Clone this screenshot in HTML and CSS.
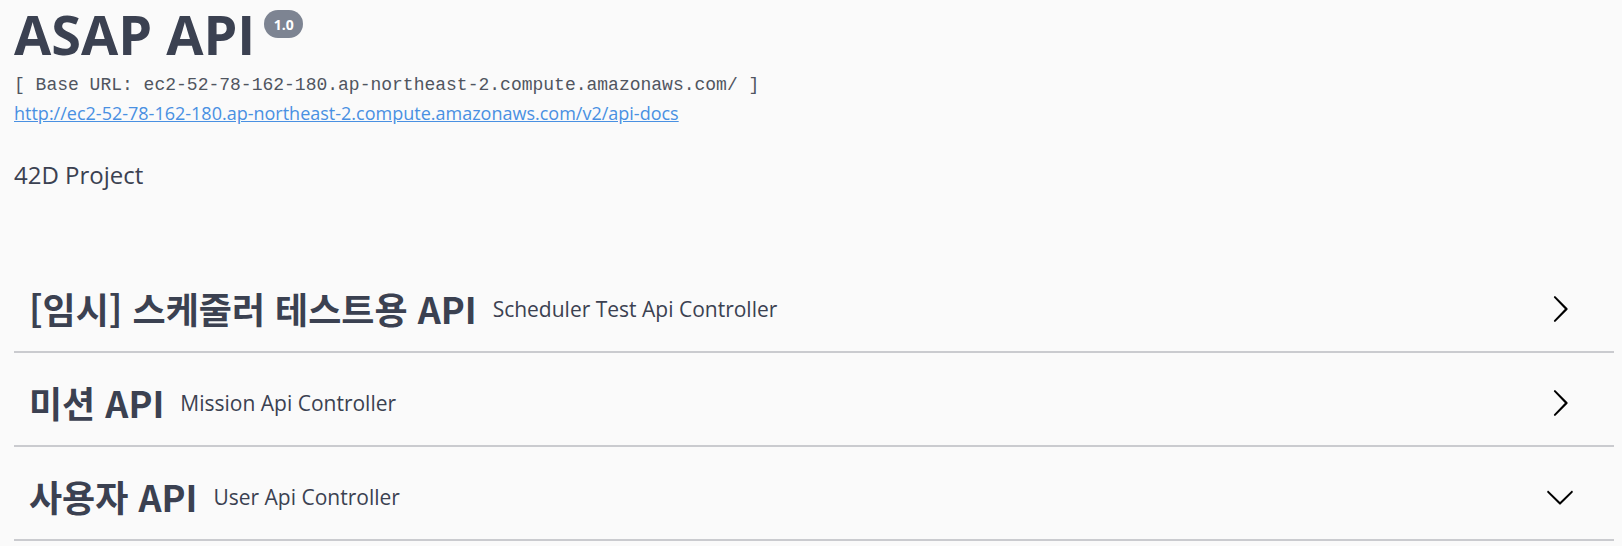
FILE: index.html
```html
<!DOCTYPE html>
<html lang="ko">
<head>
<meta charset="utf-8">
<title>ASAP API</title>
<link rel="stylesheet" href="styles.css">
</head>
<body>
<div class="wrapper">
  <div class="info">
    <div class="title-row">
      <h2 class="title">ASAP API</h2>
      <span class="version">1.0</span>
    </div>
    <div class="base-url">[ Base URL: ec2-52-78-162-180.ap-northeast-2.compute.amazonaws.com/ ]</div>
    <a class="docs-link" href="#">http://ec2-52-78-162-180.ap-northeast-2.compute.amazonaws.com/v2/api-docs</a>
    <p class="description">42D Project</p>
  </div>
  <div class="tags">
    <div class="tag">
      <h4 class="tag-title"><span class="tag-name">[임시] 스케줄러 테스트용 API</span><small class="tag-desc">Scheduler Test Api Controller</small></h4>
      <svg class="arrow" width="30" height="30" viewBox="0 0 20 20"><path d="M13.25 10L6.109 2.58a.697.697 0 0 1 0-.979.68.68 0 0 1 .969 0l7.83 7.908a.697.697 0 0 1 0 .979l-7.83 7.909a.68.68 0 0 1-.969 0 .697.697 0 0 1 0-.98L13.25 10z"/></svg>
    </div>
    <div class="tag">
      <h4 class="tag-title"><span class="tag-name">미션 API</span><small class="tag-desc">Mission Api Controller</small></h4>
      <svg class="arrow" width="30" height="30" viewBox="0 0 20 20"><path d="M13.25 10L6.109 2.58a.697.697 0 0 1 0-.979.68.68 0 0 1 .969 0l7.83 7.908a.697.697 0 0 1 0 .979l-7.83 7.909a.68.68 0 0 1-.969 0 .697.697 0 0 1 0-.98L13.25 10z"/></svg>
    </div>
    <div class="tag">
      <h4 class="tag-title"><span class="tag-name">사용자 API</span><small class="tag-desc">User Api Controller</small></h4>
      <svg class="arrow" width="30" height="30" viewBox="0 0 20 20"><path d="M17.418 6.109c.272-.268.709-.268.979 0s.271.701 0 .969l-7.908 7.83c-.27.268-.707.268-.979 0l-7.908-7.830c-.27-.268-.27-.701 0-.969.271-.268.709-.268.979 0L10 13.25l7.418-7.141z"/></svg>
    </div>
  </div>
</div>
</body>
</html>
```
FILE: styles.css
```css
html, body {
  margin: 0;
  padding: 0;
  background: #fafafa;
}
body {
  color: #3b4151;
  font-family: "Open Sans", "Noto Sans CJK KR", sans-serif;
}
.wrapper {
  width: 1600px;
  margin-left: 14px;
  padding-top: 4px;
}
.title-row {
  display: flex;
  align-items: flex-start;
}
.title {
  margin: 0;
  font-family: "Open Sans", sans-serif;
  font-weight: 700;
  font-size: 54px;
  line-height: 60px;
  color: #3b4151;
}
.version {
  margin-left: 9px;
  margin-top: 6px;
  width: 39px;
  height: 28px;
  border-radius: 14px;
  background: #7d8492;
  color: #fff;
  font-family: "Open Sans", sans-serif;
  font-weight: 700;
  font-size: 14px;
  display: flex;
  align-items: center;
  justify-content: center;
}
.base-url {
  margin-top: 9px;
  font-family: "Liberation Mono", monospace;
  font-size: 18px;
  line-height: 24px;
  color: #50555f;
  white-space: pre;
}
.docs-link {
  display: block;
  margin-top: 4px;
  font-family: "Open Sans", sans-serif;
  font-size: 18px;
  line-height: 24px;
  color: #4990e2;
  text-decoration: underline;
  width: max-content;
}
.description {
  margin: 34px 0 0;
  font-family: "Open Sans", sans-serif;
  font-size: 24px;
  line-height: 32px;
}
.tags {
  margin-top: 75px;
}
.tag {
  display: flex;
  align-items: center;
  justify-content: space-between;
  padding: 15px 39px 15px 15px;
  margin-bottom: 7px;
  border-bottom: 2px solid rgba(59, 65, 81, 0.25);
}
.tag-title {
  margin: 0;
  height: 55px;
  display: flex;
  align-items: center;
  font-weight: 700;
}
.tag-name {
  font-family: "Noto Sans CJK KR", sans-serif;
  font-weight: 700;
  font-size: 36px;
  line-height: 55px;
  letter-spacing: 0;
}
.tag-desc {
  margin-left: 16px;
  font-family: "Open Sans", sans-serif;
  font-weight: 400;
  font-size: 21px;
  line-height: 30px;
}
.arrow {
  display: block;
  fill: #000;
}
```
